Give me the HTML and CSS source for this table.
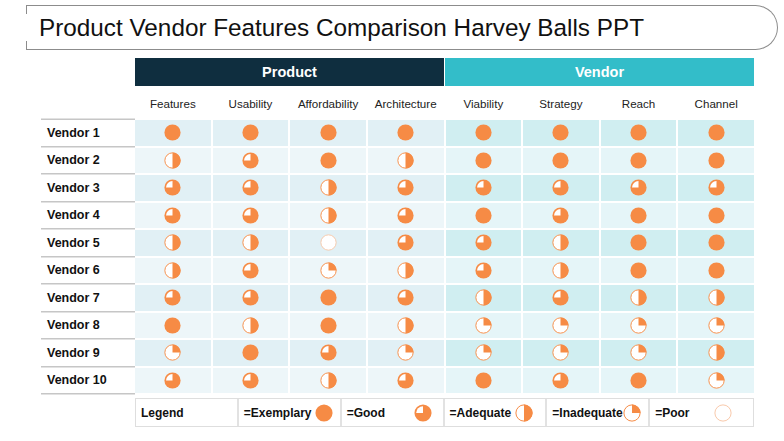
FILE: index.html
```html
<!DOCTYPE html>
<html lang="en">
<head>
<meta charset="utf-8">
<title>Product Vendor Features Comparison Harvey Balls PPT</title>
<link rel="stylesheet" href="styles.css">
</head>
<body>
<svg class="defs" width="0" height="0" aria-hidden="true">
  <symbol id="b4" viewBox="0 0 20 20"><circle cx="10" cy="10" r="9.5" fill="#f68b45"/></symbol>
  <symbol id="b3" viewBox="0 0 20 20"><circle cx="10" cy="10" r="9.5" fill="#f68b45"/><path d="M10 10V2.4A7.6 7.6 0 0 0 2.4 10Z" fill="#fff"/></symbol>
  <symbol id="b2" viewBox="0 0 20 20"><circle cx="10" cy="10" r="9" fill="#fff" stroke="#f68b45" stroke-width="1.1"/><path d="M10 0.5A9.5 9.5 0 0 1 10 19.5Z" fill="#f68b45"/></symbol>
  <symbol id="b1" viewBox="0 0 20 20"><circle cx="10" cy="10" r="9" fill="#fff" stroke="#f68b45" stroke-width="1.1"/><path d="M10 10V0.5A9.5 9.5 0 0 1 19.5 10Z" fill="#f68b45"/></symbol>
  <symbol id="b0" viewBox="0 0 20 20"><circle cx="10" cy="10" r="9" fill="#fff" stroke="#f7c3a1" stroke-width="1"/></symbol>
</svg>

<header class="title">Product Vendor Features Comparison Harvey Balls PPT</header>

<main class="board">
  <div class="bars">
    <div class="bar bar-product">Product</div>
    <div class="bar bar-vendor">Vendor</div>
  </div>

  <div class="grid">
    <div class="row head">
      <div class="corner"></div>
      <div class="colhead">Features</div>
      <div class="colhead">Usability</div>
      <div class="colhead">Affordability</div>
      <div class="colhead">Architecture</div>
      <div class="colhead">Viability</div>
      <div class="colhead">Strategy</div>
      <div class="colhead">Reach</div>
      <div class="colhead">Channel</div>
    </div>

    <div class="row odd">
      <div class="label label-first">Vendor 1</div>
      <div class="cell p"><svg class="ball"><use href="#b4"/></svg></div>
      <div class="cell p"><svg class="ball"><use href="#b4"/></svg></div>
      <div class="cell p"><svg class="ball"><use href="#b4"/></svg></div>
      <div class="cell p"><svg class="ball"><use href="#b4"/></svg></div>
      <div class="cell v"><svg class="ball"><use href="#b4"/></svg></div>
      <div class="cell v"><svg class="ball"><use href="#b4"/></svg></div>
      <div class="cell v"><svg class="ball"><use href="#b4"/></svg></div>
      <div class="cell v"><svg class="ball"><use href="#b4"/></svg></div>
    </div>

    <div class="row even">
      <div class="label">Vendor 2</div>
      <div class="cell p"><svg class="ball"><use href="#b2"/></svg></div>
      <div class="cell p"><svg class="ball"><use href="#b3"/></svg></div>
      <div class="cell p"><svg class="ball"><use href="#b4"/></svg></div>
      <div class="cell p"><svg class="ball"><use href="#b2"/></svg></div>
      <div class="cell v"><svg class="ball"><use href="#b4"/></svg></div>
      <div class="cell v"><svg class="ball"><use href="#b4"/></svg></div>
      <div class="cell v"><svg class="ball"><use href="#b4"/></svg></div>
      <div class="cell v"><svg class="ball"><use href="#b4"/></svg></div>
    </div>

    <div class="row odd">
      <div class="label">Vendor 3</div>
      <div class="cell p"><svg class="ball"><use href="#b3"/></svg></div>
      <div class="cell p"><svg class="ball"><use href="#b3"/></svg></div>
      <div class="cell p"><svg class="ball"><use href="#b2"/></svg></div>
      <div class="cell p"><svg class="ball"><use href="#b3"/></svg></div>
      <div class="cell v"><svg class="ball"><use href="#b3"/></svg></div>
      <div class="cell v"><svg class="ball"><use href="#b3"/></svg></div>
      <div class="cell v"><svg class="ball"><use href="#b3"/></svg></div>
      <div class="cell v"><svg class="ball"><use href="#b3"/></svg></div>
    </div>

    <div class="row even">
      <div class="label">Vendor 4</div>
      <div class="cell p"><svg class="ball"><use href="#b3"/></svg></div>
      <div class="cell p"><svg class="ball"><use href="#b3"/></svg></div>
      <div class="cell p"><svg class="ball"><use href="#b2"/></svg></div>
      <div class="cell p"><svg class="ball"><use href="#b3"/></svg></div>
      <div class="cell v"><svg class="ball"><use href="#b4"/></svg></div>
      <div class="cell v"><svg class="ball"><use href="#b3"/></svg></div>
      <div class="cell v"><svg class="ball"><use href="#b4"/></svg></div>
      <div class="cell v"><svg class="ball"><use href="#b4"/></svg></div>
    </div>

    <div class="row odd">
      <div class="label">Vendor 5</div>
      <div class="cell p"><svg class="ball"><use href="#b2"/></svg></div>
      <div class="cell p"><svg class="ball"><use href="#b2"/></svg></div>
      <div class="cell p"><svg class="ball"><use href="#b0"/></svg></div>
      <div class="cell p"><svg class="ball"><use href="#b3"/></svg></div>
      <div class="cell v"><svg class="ball"><use href="#b3"/></svg></div>
      <div class="cell v"><svg class="ball"><use href="#b2"/></svg></div>
      <div class="cell v"><svg class="ball"><use href="#b4"/></svg></div>
      <div class="cell v"><svg class="ball"><use href="#b4"/></svg></div>
    </div>

    <div class="row even">
      <div class="label">Vendor 6</div>
      <div class="cell p"><svg class="ball"><use href="#b2"/></svg></div>
      <div class="cell p"><svg class="ball"><use href="#b3"/></svg></div>
      <div class="cell p"><svg class="ball"><use href="#b1"/></svg></div>
      <div class="cell p"><svg class="ball"><use href="#b2"/></svg></div>
      <div class="cell v"><svg class="ball"><use href="#b3"/></svg></div>
      <div class="cell v"><svg class="ball"><use href="#b2"/></svg></div>
      <div class="cell v"><svg class="ball"><use href="#b4"/></svg></div>
      <div class="cell v"><svg class="ball"><use href="#b4"/></svg></div>
    </div>

    <div class="row odd">
      <div class="label">Vendor 7</div>
      <div class="cell p"><svg class="ball"><use href="#b3"/></svg></div>
      <div class="cell p"><svg class="ball"><use href="#b3"/></svg></div>
      <div class="cell p"><svg class="ball"><use href="#b4"/></svg></div>
      <div class="cell p"><svg class="ball"><use href="#b3"/></svg></div>
      <div class="cell v"><svg class="ball"><use href="#b2"/></svg></div>
      <div class="cell v"><svg class="ball"><use href="#b3"/></svg></div>
      <div class="cell v"><svg class="ball"><use href="#b2"/></svg></div>
      <div class="cell v"><svg class="ball"><use href="#b2"/></svg></div>
    </div>

    <div class="row even">
      <div class="label">Vendor 8</div>
      <div class="cell p"><svg class="ball"><use href="#b4"/></svg></div>
      <div class="cell p"><svg class="ball"><use href="#b2"/></svg></div>
      <div class="cell p"><svg class="ball"><use href="#b4"/></svg></div>
      <div class="cell p"><svg class="ball"><use href="#b2"/></svg></div>
      <div class="cell v"><svg class="ball"><use href="#b1"/></svg></div>
      <div class="cell v"><svg class="ball"><use href="#b1"/></svg></div>
      <div class="cell v"><svg class="ball"><use href="#b1"/></svg></div>
      <div class="cell v"><svg class="ball"><use href="#b1"/></svg></div>
    </div>

    <div class="row odd">
      <div class="label">Vendor 9</div>
      <div class="cell p"><svg class="ball"><use href="#b1"/></svg></div>
      <div class="cell p"><svg class="ball"><use href="#b4"/></svg></div>
      <div class="cell p"><svg class="ball"><use href="#b3"/></svg></div>
      <div class="cell p"><svg class="ball"><use href="#b1"/></svg></div>
      <div class="cell v"><svg class="ball"><use href="#b1"/></svg></div>
      <div class="cell v"><svg class="ball"><use href="#b1"/></svg></div>
      <div class="cell v"><svg class="ball"><use href="#b1"/></svg></div>
      <div class="cell v"><svg class="ball"><use href="#b2"/></svg></div>
    </div>

    <div class="row even">
      <div class="label">Vendor 10</div>
      <div class="cell p"><svg class="ball"><use href="#b3"/></svg></div>
      <div class="cell p"><svg class="ball"><use href="#b3"/></svg></div>
      <div class="cell p"><svg class="ball"><use href="#b2"/></svg></div>
      <div class="cell p"><svg class="ball"><use href="#b3"/></svg></div>
      <div class="cell v"><svg class="ball"><use href="#b4"/></svg></div>
      <div class="cell v"><svg class="ball"><use href="#b3"/></svg></div>
      <div class="cell v"><svg class="ball"><use href="#b4"/></svg></div>
      <div class="cell v"><svg class="ball"><use href="#b1"/></svg></div>
    </div>
  </div>

  <div class="legend">
    <div class="lg">Legend</div>
    <div class="lg lg-exemplary">=Exemplary<svg class="lball"><use href="#b4"/></svg></div>
    <div class="lg lg-good">=Good<svg class="lball"><use href="#b3"/></svg></div>
    <div class="lg lg-adequate">=Adequate<svg class="lball"><use href="#b2"/></svg></div>
    <div class="lg lg-inadequate">=Inadequate<svg class="lball"><use href="#b1"/></svg></div>
    <div class="lg lg-poor">=Poor<svg class="lball"><use href="#b0"/></svg></div>
  </div>
</main>
</body>
</html>
```

FILE: styles.css
```css
* { box-sizing: border-box; }

html, body {
  margin: 0;
  padding: 0;
  background: #ffffff;
}

body {
  width: 784px;
  height: 441px;
  overflow: hidden;
  font-family: "Liberation Sans", Arial, sans-serif;
  color: #111;
}

.defs {
  position: absolute;
  width: 0;
  height: 0;
  overflow: hidden;
}

.title {
  position: relative;
  margin: 5px 6px 0 26px;
  height: 45px;
  border: 1px solid #8c8c8c;
  border-left: none;
  border-radius: 0 23px 23px 0;
  display: flex;
  align-items: center;
  padding-left: 13px;
  padding-top: 1px;
  font-size: 24.3px;
  color: #111;
}

.title::before,
.title::after {
  content: "";
  position: absolute;
  left: 0;
  width: 1px;
  height: 8px;
  background: #8c8c8c;
}

.title::before { top: 0; }
.title::after { bottom: 0; }

.board {
  margin: 8px 0 0 41px;
  width: 713px;
}

.bars {
  display: flex;
  gap: 1px;
  margin-left: 94px;
  height: 28px;
}

.bar {
  flex: 1;
  display: flex;
  align-items: center;
  justify-content: center;
  color: #fff;
  font-weight: bold;
  font-size: 14.5px;
}

.bar-product { background: #0f2e3f; }
.bar-vendor { background: #33bdc9; }

.grid {
  display: grid;
  grid-template-columns: 92px repeat(8, 1fr);
  grid-template-rows: 32px repeat(10, 25.5px);
  column-gap: 2px;
  row-gap: 2px;
}

.row { display: contents; }

.colhead {
  display: flex;
  align-items: center;
  justify-content: center;
  font-size: 11.6px;
  color: #222;
  padding-top: 2px;
}

.label {
  display: flex;
  align-items: center;
  padding-left: 6px;
  margin-right: -2px;
  font-weight: bold;
  font-size: 12.5px;
  color: #111;
  box-shadow: 0 1.5px 0 #c6c6c6;
}

.label-first {
  box-shadow: 0 1.5px 0 #c6c6c6, 0 -1.5px 0 #c6c6c6;
}

.cell {
  display: flex;
  align-items: center;
  justify-content: center;
}

.odd .p { background: #e1f0f5; }
.even .p { background: #edf6f9; }
.odd .v { background: #d0eef1; }
.even .v { background: #e5f5f8; }

.ball {
  width: 17px;
  height: 17px;
}

.legend {
  display: grid;
  grid-template-columns: repeat(6, 1fr);
  margin: 5px 0 0 94px;
  height: 29px;
  border: 1.5px solid #dedede;
}

.lg {
  min-width: 0;
  display: flex;
  align-items: center;
  justify-content: space-between;
  padding-left: 5px;
  font-weight: bold;
  font-size: 12px;
  color: #111;
  border-right: 2px solid #e2e2e2;
  white-space: nowrap;
}

.lg:last-child { border-right: none; }

.lball {
  width: 18px;
  height: 18px;
  flex: none;
}

.lg-exemplary { padding-right: 7px; }
.lg-good { padding-right: 11px; }
.lg-adequate { padding-right: 12px; }
.lg-inadequate { padding-right: 7px; }
.lg-poor { padding-right: 21px; }
```
